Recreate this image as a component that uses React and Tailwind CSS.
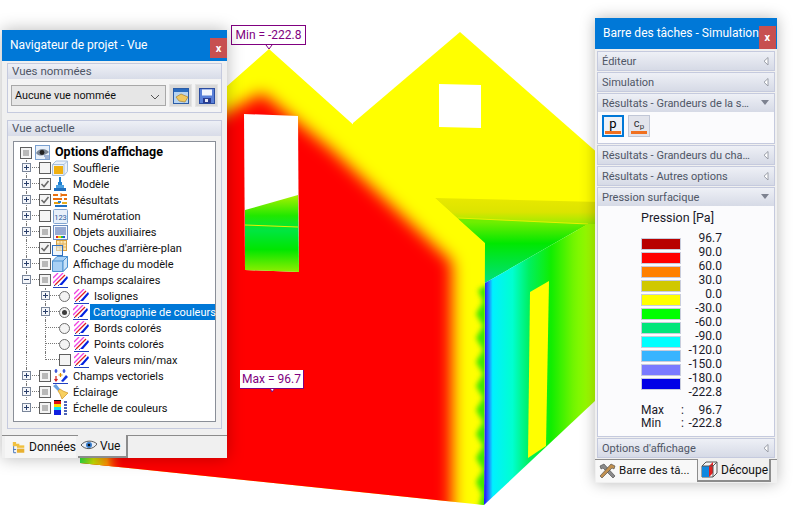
import React from "react";

const font = { fontFamily: 'Roboto, sans-serif' };

function Scene() {
  return (
    <svg className="absolute inset-0" width="796" height="506" viewBox="0 0 796 506">
      <defs>
        <filter id="soft" x="-20%" y="-20%" width="140%" height="140%">
          <feGaussianBlur stdDeviation="8" />
        </filter>
        <filter id="softer" x="-50%" y="-20%" width="200%" height="140%">
          <feGaussianBlur stdDeviation="2.5" />
        </filter>
        <clipPath id="frontWall">
          <polygon points="80,463 484,505 485,243 269,49 200,110 80,110" />
        </clipPath>
        <linearGradient id="sideWall" x1="485" y1="0" x2="595" y2="0" gradientUnits="userSpaceOnUse">
          <stop offset="0" stopColor="#2020ff" />
          <stop offset="0.025" stopColor="#3060ff" />
          <stop offset="0.07" stopColor="#00f0ff" />
          <stop offset="0.25" stopColor="#00ffd0" />
          <stop offset="0.4" stopColor="#00f060" />
          <stop offset="0.6" stopColor="#10ee00" />
          <stop offset="0.8" stopColor="#70f500" />
          <stop offset="1" stopColor="#b0ff00" />
        </linearGradient>
        <linearGradient id="floorBand" x1="0" y1="198" x2="0" y2="226" gradientUnits="userSpaceOnUse">
          <stop offset="0" stopColor="#e8e800" />
          <stop offset="0.5" stopColor="#dce400" />
          <stop offset="1" stopColor="#90ee00" />
        </linearGradient>
        <linearGradient id="inner" x1="0" y1="222" x2="0" y2="283" gradientUnits="userSpaceOnUse">
          <stop offset="0" stopColor="#70ee00" />
          <stop offset="0.35" stopColor="#00e800" />
          <stop offset="1" stopColor="#00e080" />
        </linearGradient>
        <linearGradient id="winGreen" x1="0" y1="197" x2="0" y2="272" gradientUnits="userSpaceOnUse">
          <stop offset="0" stopColor="#a0f000" />
          <stop offset="0.25" stopColor="#20e800" />
          <stop offset="0.45" stopColor="#00e640" />
          <stop offset="0.7" stopColor="#00e600" />
          <stop offset="1" stopColor="#90ee00" />
        </linearGradient>
        <linearGradient id="cornerLeft" x1="80" y1="0" x2="125" y2="0" gradientUnits="userSpaceOnUse">
          <stop offset="0" stopColor="#30e040" />
          <stop offset="0.3" stopColor="#c8e000" />
          <stop offset="0.6" stopColor="#ff9000" />
          <stop offset="1" stopColor="#ff0000" stopOpacity="0" />
        </linearGradient>
      </defs>

      {/* back gable */}
      <polygon points="353,123 460,32 600,155 600,230 353,230" fill="#ffff00" />
      <polygon points="439,84 481,85 481,128 439,127" fill="#ffffff" />

      {/* floor seen through the opening */}
      <polygon points="435,198 600,202 600,226 458,219" fill="url(#floorBand)" />
      <polygon points="458,218 588,224 485,283 470,260" fill="url(#inner)" />
      <line x1="458" y1="218" x2="588" y2="224" stroke="#e8f000" strokeWidth="1" />

      {/* side wall */}
      <polygon points="485,283 588,224 596,224 596,400 484,505" fill="url(#sideWall)" />
      <polygon points="530,292 549,281 546,446 528,458" fill="#ffff00" />

      {/* front wall */}
      <g clipPath="url(#frontWall)">
        <rect x="60" y="30" width="430" height="480" fill="#ffff00" />
        <polygon
          points="490,283 478,290 483,302 476,314 483,326 476,338 483,350 476,362 483,374 476,386 483,398 476,410 483,422 476,434 483,446 476,458 483,470 476,482 482,494 478,510 490,510"
          fill="#40e800"
          filter="url(#softer)"
        />
        <polygon points="60,130 205,125 262,93 332,150 452,262 452,520 60,520" fill="#ff0000" filter="url(#soft)" />
        <rect x="80" y="450" width="45" height="20" fill="url(#cornerLeft)" />
      </g>

      {/* window in the front wall */}
      <polygon points="244,114 298,116 299,272 245,270" fill="#ffffff" />
      <polygon points="245,210 298,195 299,272 245,270" fill="url(#winGreen)" />
      <line x1="245" y1="225" x2="298" y2="227" stroke="#e8f000" strokeWidth="1" />

      {/* tag pointers */}
      <path d="M266 45 L269 49 L272 45" fill="#fff" stroke="#800080" />
      <path d="M270 388 L272 392 L275 388" fill="#fff" stroke="#800080" />
    </svg>
  );
}

function Hatch() {
  return (
    <svg width="15" height="15" viewBox="0 0 15 15">
      <path d="M0 5L5 0M0 10L10 0" stroke="#f040e0" strokeWidth="1.3" />
      <path d="M2 12L12 2" stroke="#e02020" strokeWidth="1.3" />
      <path d="M6 12L14 3L15 5L9 12Z" fill="#0020e0" />
      <path d="M0 14.5H15" stroke="#2040c0" strokeWidth="1" />
      <path d="M1 12.5h1M5 12.5h1" stroke="#2040c0" />
    </svg>
  );
}

const icons = {
  eye: (
    <svg width="15" height="15" viewBox="0 0 15 15">
      <rect x="0.5" y="0.5" width="14" height="14" fill="#e8f0fa" stroke="#7aa0d0" />
      <path d="M1 8C4 3 10 3 14 7C10 11 4 12 1 8Z" fill="#7b8694" />
      <circle cx="7" cy="7.5" r="2.4" fill="#222" />
      <path d="M9 11h5M10 13h4" stroke="#5a7ab0" />
    </svg>
  ),
  wind: (
    <svg width="16" height="16" viewBox="0 0 16 16">
      <path d="M0.5 4.5L4 1H15.5V11.5L12 15.5H0.5Z" fill="#eaf1fa" stroke="#a8c0dc" />
      <path d="M0.5 4.5H12V15.5M12 4.5L15.5 1" fill="none" stroke="#a8c0dc" />
      <rect x="2" y="6" width="9" height="8" fill="#f0b010" />
    </svg>
  ),
  model: (
    <svg width="16" height="16" viewBox="0 0 16 16">
      <rect x="7" y="1" width="2" height="5" fill="#2080d0" />
      <rect x="6" y="6" width="4" height="3" fill="#2080d0" />
      <rect x="4" y="9" width="8" height="3" fill="#4aa0e0" />
      <rect x="2" y="12" width="12" height="3" fill="#2070c0" />
    </svg>
  ),
  results: (
    <svg width="16" height="16" viewBox="0 0 16 16">
      <path d="M1 2h5v2H1zM9 2h6v2H9zM1 6h9v2H1zM12 6h3v2h-3z" fill="#e87010" />
      <path d="M9 1v4" stroke="#e87010" />
      <rect x="2" y="10" width="6" height="2" fill="#e8a010" />
      <rect x="10" y="10" width="5" height="2" fill="#e8b020" />
      <rect x="6" y="9" width="3" height="2" fill="#2080d0" />
      <rect x="3" y="13" width="12" height="2" fill="#2070c0" />
    </svg>
  ),
  numbers: (
    <svg width="15" height="15" viewBox="0 0 15 15">
      <rect x="0.5" y="0.5" width="14" height="14" rx="1" fill="#e8f0fa" stroke="#80a4d0" />
      <text x="7.5" y="10.5" textAnchor="middle" fontSize="7.5" fill="#2a5a9a" style={font}>123</text>
    </svg>
  ),
  aux: (
    <svg width="15" height="15" viewBox="0 0 15 15">
      <rect x="0.5" y="0.5" width="14" height="14" fill="#f4f8fd" stroke="#6a8cc0" />
      <path d="M2 3h11M2 5h11M2 7h11M2 9h11" stroke="#3a5ca8" />
      <path d="M3 12h2" stroke="#e02020" strokeWidth="2" />
      <path d="M5 12h3" stroke="#f0d000" strokeWidth="2" />
      <path d="M8 12h2" stroke="#20c040" strokeWidth="2" />
      <path d="M10 12h2" stroke="#2050e0" strokeWidth="2" />
    </svg>
  ),
  layers: (
    <svg width="16" height="16" viewBox="0 0 16 16">
      <rect x="4.5" y="0.5" width="10" height="10" fill="#fbe6b0" stroke="#d8a040" />
      <path d="M8 1v9M11 1v9M5 4h9M5 7h9" stroke="#e0b060" />
      <rect x="0.5" y="5.5" width="10" height="10" fill="#dcebf8" fillOpacity="0.5" stroke="#3070c0" />
    </svg>
  ),
  cube: (
    <svg width="16" height="16" viewBox="0 0 16 16">
      <path d="M0.5 5L5 0.5H15.5V11L11 15.5H0.5Z" fill="#a8d0f4" stroke="#4a90d0" />
      <path d="M0.5 5H11V15.5M11 5L15.5 0.5" fill="none" stroke="#4a90d0" />
      <path d="M11 5L15.5 0.5V11L11 15.5Z" fill="#c8e2f8" stroke="#4a90d0" />
    </svg>
  ),
  hatch: <Hatch />,
  vectors: (
    <svg width="15" height="15" viewBox="0 0 15 15">
      <path d="M3 0v4M1.5 2h3M11 0v4M9.5 2h3" stroke="#1030d0" strokeWidth="1.2" />
      <path d="M7.5 4v4M5.5 6h4" stroke="#e09000" strokeWidth="1.2" />
      <path d="M3 7v5M1.5 10l1.5 2 1.5-2" stroke="#d02020" fill="none" strokeWidth="1.2" />
      <path d="M8 12L13 6L15 8L10 13Z" fill="#1030e0" />
      <path d="M0 14.5H15" stroke="#2040c0" />
    </svg>
  ),
  light: (
    <svg width="15" height="16" viewBox="0 0 15 16">
      <path d="M0 2L3 0L7 5L5 7Z" fill="#6aa0e0" />
      <path d="M5 7L7 5L10 7L15 9L9 15L7 10Z" fill="#f8d060" stroke="#d09020" strokeWidth="0.7" />
    </svg>
  ),
  scale: (
    <svg width="15" height="16" viewBox="0 0 15 16">
      <rect x="1" y="0" width="7" height="3" fill="#111" />
      <rect x="1" y="1" width="7" height="3" fill="#e01010" />
      <rect x="1" y="4" width="7" height="3" fill="#f8e000" />
      <rect x="1" y="7" width="7" height="3" fill="#10e0f0" />
      <rect x="1" y="10" width="7" height="5" fill="#1020e0" />
      <path d="M11 2h3M11 5h3M11 8h3M11 11h3M11 14h3" stroke="#1030a0" strokeWidth="1.4" />
    </svg>
  ),
};

const tree = [
  { label: "Soufflerie", icon: "wind", check: "off", exp: "+" },
  { label: "Modèle", icon: "model", check: "on", exp: "+" },
  { label: "Résultats", icon: "results", check: "on", exp: "+" },
  { label: "Numérotation", icon: "numbers", check: "off", exp: "+" },
  { label: "Objets auxiliaires", icon: "aux", check: "mid", exp: "+" },
  { label: "Couches d'arrière-plan", icon: "layers", check: "on" },
  { label: "Affichage du modèle", icon: "cube", check: "mid", exp: "+" },
  { label: "Champs scalaires", icon: "hatch", check: "mid", exp: "-" },
  { label: "Isolignes", icon: "hatch", radio: "off", exp: "+", sub: true },
  { label: "Cartographie de couleurs", icon: "hatch", radio: "on", exp: "+", sub: true, selected: true },
  { label: "Bords colorés", icon: "hatch", radio: "off", sub: true },
  { label: "Points colorés", icon: "hatch", radio: "off", sub: true },
  { label: "Valeurs min/max", icon: "hatch", check: "off", sub: true, last: true },
  { label: "Champs vectoriels", icon: "vectors", check: "mid", exp: "+" },
  { label: "Éclairage", icon: "light", check: "mid", exp: "+" },
  { label: "Échelle de couleurs", icon: "scale", check: "mid", exp: "+", end: true },
];

function Check({ state }) {
  return (
    <span className="w-[12px] h-[12px] border border-[#5e5e5e] bg-[#f4f4f4] flex items-center justify-center shrink-0">
      {state === "mid" && <span className="w-[6px] h-[6px] bg-[#b8b8b8]" />}
      {state === "on" && (
        <svg width="10" height="10" viewBox="0 0 10 10">
          <path d="M1.5 5L4 7.5L8.5 2" fill="none" stroke="#6a6a6a" strokeWidth="1.6" />
        </svg>
      )}
    </span>
  );
}

function Radio({ on }) {
  return (
    <span className="w-[11px] h-[11px] rounded-full border border-[#6e6e6e] bg-[#f4f4f4] flex items-center justify-center shrink-0">
      {on && <span className="w-[5px] h-[5px] rounded-full bg-[#3c3c3c]" />}
    </span>
  );
}

function Expander({ sign }) {
  return (
    <span className="absolute left-[5px] top-[3px] w-[9px] h-[9px] border border-[#7a869a] bg-[#f4f6fa] flex items-center justify-center">
      <span className="absolute w-[5px] h-px bg-[#2a3f6a]" />
      {sign === "+" && <span className="absolute w-px h-[5px] bg-[#2a3f6a]" />}
    </span>
  );
}

// one slot of the tree gutter with its dotted connectors
function Gutter({ className, vertical, half, elbow, sign }) {
  return (
    <span className={`relative h-4 shrink-0 ${className}`}>
      {vertical && (
        <span className={half ? "absolute left-[9px] top-0 h-[8px] border-l border-dotted border-[#777]" : "absolute left-[9px] top-0 h-4 border-l border-dotted border-[#777]"} />
      )}
      {elbow && <span className="absolute left-[9px] right-0 top-[7px] border-t border-dotted border-[#777]" />}
      {sign && <Expander sign={sign} />}
    </span>
  );
}

function TreeRow({ row }) {
  return (
    <div className="flex items-center h-4 text-[11px] text-[#111]">
      {row.sub && <Gutter className="w-[19px]" vertical />}
      <Gutter className={row.sub ? "w-[23px]" : "w-[22px]"} vertical={!row.end} half={row.last} elbow sign={row.exp} />
      {row.radio ? <Radio on={row.radio === "on"} /> : <Check state={row.check} />}
      <span className={row.sub ? (row.radio ? "w-[3px]" : "w-[2px]") : "w-px"} />
      <span className="w-4 h-4 flex items-center justify-center shrink-0">{icons[row.icon]}</span>
      {row.selected ? (
        <span className="ml-[2px] pl-[3px] w-[125px] h-4 bg-[#0078d7] text-white leading-[17px] whitespace-nowrap">{row.label}</span>
      ) : (
        <span className="ml-[5px] h-4 leading-[17px] whitespace-nowrap">{row.label}</span>
      )}
    </div>
  );
}

function NavigatorPanel() {
  return (
    <div className="absolute left-[2px] top-[30px] w-[225px] h-[428px] bg-[#f0f0f0] flex flex-col shadow-[0_0_16px_rgba(0,0,0,0.28)]" style={font}>
      <div className="h-[31px] bg-[#0078d7] flex items-start justify-between pl-[8px] text-white text-[12px]">
        <span className="leading-[31px]">Navigateur de projet - Vue</span>
        <span className="mt-[8px] w-[17px] h-[20px] bg-[#c75050] flex items-center justify-center text-[11px] font-bold leading-none">x</span>
      </div>

      <div className="mx-[5px] mt-[2px] h-[50px] border border-[#c5cade] flex flex-col">
        <div className="h-[15px] bg-gradient-to-b from-[#eef0f6] to-[#d8dce8] text-[11.5px] leading-[15px] pl-[4px] text-[#4f5666]">Vues nommées</div>
        <div className="flex items-center pl-[3px] pt-[5px] bg-[#f4f4f4] flex-1 pb-[5px]">
          <div className="w-[155px] h-[21px] border border-[#a8a8a8] bg-[#e6e6e6] flex items-center justify-between pl-[3px] pr-[5px] pt-[2px] text-[10.8px] text-[#111]">
            <span>Aucune vue nommée</span>
            <svg width="10" height="6" viewBox="0 0 10 6">
              <path d="M1 1L5 5L9 1" fill="none" stroke="#555" />
            </svg>
          </div>
          <div className="ml-[3px] w-[23px] h-[23px] bg-[#d8d8d8] border border-[#e4e4e4] flex items-center justify-center">
            <svg width="16" height="16" viewBox="0 0 16 16">
              <rect x="0.5" y="0.5" width="15" height="15" fill="#b8d4f0" stroke="#2a5ca8" />
              <rect x="1" y="1" width="14" height="3" fill="#2a6cc0" />
              <path d="M3 9L8 6L15 9L12 14L6 13Z" fill="#f0c860" stroke="#a07820" strokeWidth="0.6" />
            </svg>
          </div>
          <div className="ml-[3px] w-[23px] h-[23px] bg-[#d8d8d8] border border-[#e4e4e4] flex items-center justify-center">
            <svg width="16" height="16" viewBox="0 0 16 16">
              <rect x="0.5" y="0.5" width="15" height="15" fill="#5a80d8" stroke="#2a4ca0" />
              <rect x="3" y="1.5" width="10" height="6" fill="#f4f6fc" />
              <rect x="4" y="10" width="8" height="5" fill="#2a3c90" />
              <rect x="6" y="11" width="3" height="3" fill="#e8ecf8" />
            </svg>
          </div>
        </div>
      </div>

      <div className="mx-[5px] mt-[7px] h-[309px] border border-[#c5cade] flex flex-col">
        <div className="h-[15px] bg-gradient-to-b from-[#eef0f6] to-[#d8dce8] text-[11.5px] leading-[15px] pl-[4px] text-[#4f5666]">Vue actuelle</div>
        <div className="mx-[5px] mt-[5px] h-[281px] border border-[#8a8f98] bg-white pl-[3px] pt-[2px]">
          <div className="flex items-center h-4 pl-[3px] pt-[1px] text-[12.5px] font-bold text-black">
            <Check state="mid" />
            <span className="w-[3px]" />
            {icons.eye}
            <span className="ml-[5px] whitespace-nowrap">Options d'affichage</span>
          </div>
          {tree.map((row) => (
            <TreeRow key={row.label} row={row} />
          ))}
        </div>
      </div>

      <div className="mt-[6px] flex-1 flex items-start border-t border-[#8c8c8c]">
        <div className="ml-[3px] w-[71px] h-[22px] bg-[#f6f6f6] flex items-center gap-[4px] pl-[7px] text-[12px] text-[#111]">
          <svg width="16" height="16" viewBox="0 0 16 16">
            <path d="M1 2H5V4H9V7H1Z" fill="#f0c040" />
            <path d="M2 7V15H5M2 11H5" fill="none" stroke="#2a60b0" />
            <rect x="6" y="6" width="9" height="3" fill="#f0c040" />
            <rect x="6" y="10" width="9" height="5" fill="#e8b030" />
          </svg>
          <span>Données</span>
        </div>
        <div className="ml-[2px] -mt-px w-[50px] h-[23px] bg-[#f0f0f0] border-r-2 border-b-2 border-[#8c8c8c] flex items-center gap-[3px] pl-[3px] text-[12px] text-[#111]">
          <svg width="16" height="12" viewBox="0 0 16 12">
            <path d="M0 5C4 0 12 0 16 4C12 10 4 10 0 5Z" fill="#e8eef6" stroke="#333" strokeWidth="0.8" />
            <circle cx="8" cy="5" r="3" fill="#3a80d0" />
            <circle cx="8" cy="5" r="1.3" fill="#111" />
          </svg>
          <span>Vue</span>
        </div>
      </div>
    </div>
  );
}

function SectionHead({ title, open }) {
  return (
    <div className="h-[18px] bg-gradient-to-b from-[#eef0f6] to-[#d6dae6] flex items-center justify-between pl-[4px] pr-[5px] text-[11px] text-[#4f5666] whitespace-nowrap">
      <span className="pt-[2px]">{title}</span>
      {open ? (
        <svg width="8" height="6" viewBox="0 0 8 6">
          <path d="M0 0H8L4 5Z" fill="#7d8290" />
        </svg>
      ) : (
        <svg width="6" height="9" viewBox="0 0 6 9">
          <path d="M5 0.5V8L1 4.2Z" fill="#fff" stroke="#9a9ea8" />
        </svg>
      )}
    </div>
  );
}

function Section({ title, open, children }) {
  return (
    <div className="border border-[#c5cade] mx-[2px]">
      <SectionHead title={title} open={open} />
      {children}
    </div>
  );
}

const legend = [
  ["#b80000", "96.7"],
  ["#ff0000", "90.0"],
  ["#ff8000", "60.0"],
  ["#d0c800", "30.0"],
  ["#ffff00", "0.0"],
  ["#00ff00", "-30.0"],
  ["#00e67a", "-60.0"],
  ["#00ffff", "-90.0"],
  ["#38b4ff", "-120.0"],
  ["#7a7aff", "-150.0"],
  ["#0000e6", "-180.0"],
];

function Legend() {
  return (
    <div className="h-[230px] bg-[#fbfbfd] pl-[43px] text-[12px] text-[#1a1a2a]">
      <div className="pt-[4px] h-[20px] leading-[15px] text-[12.5px]">Pression [Pa]</div>
      <div className="flex mt-[5px]">
        <div className="flex flex-col gap-[2px] mt-[7px]">
          {legend.map(([color]) => (
            <span key={color} className="w-[40px] h-[12px] border border-[#c8ccdc]" style={{ background: color }} />
          ))}
        </div>
        <div className="w-[41px] flex flex-col items-end">
          {legend.map(([, value]) => (
            <span key={value} className="h-[14px] leading-[14px]">{value}</span>
          ))}
          <span className="h-[14px] leading-[14px]">-222.8</span>
        </div>
      </div>
      <div className="mt-[5px] w-[81px] flex justify-between leading-[13px]">
        <span className="w-[38px]">Max</span><span>:</span><span className="w-[36px] text-right">96.7</span>
      </div>
      <div className="w-[81px] flex justify-between leading-[13px]">
        <span className="w-[38px]">Min</span><span>:</span><span className="w-[36px] text-right">-222.8</span>
      </div>
    </div>
  );
}

function TaskPanel() {
  return (
    <div className="absolute left-[595px] top-[18px] w-[182px] h-[465px] bg-[#f0f0f0] flex flex-col shadow-[0_0_14px_rgba(0,0,0,0.28)]" style={font}>
      <div className="h-[31px] bg-[#0078d7] flex items-start justify-between pl-[8px] pr-[1px] text-white text-[12px] whitespace-nowrap">
        <span className="leading-[31px]">Barre des tâches - Simulation</span>
        <span className="mt-[8px] w-[19px] h-[23px] bg-[#c75050] flex items-center justify-center text-[11px] font-bold leading-none">x</span>
      </div>
      <div className="flex flex-col gap-px mt-[2px]">
        <Section title="Éditeur" />
        <Section title="Simulation" />
        <Section title="Résultats - Grandeurs de la s…" open>
          <div className="h-[31px] bg-[#fbfbfd] flex gap-[4px] pl-[4px] pt-[3px]">
            <div className="w-[22px] h-[22px] border-2 border-[#0078d7] bg-[#eef2f8] flex flex-col items-center text-[13px] leading-[13px] text-black">
              <span className="h-[14px]">p</span>
              <span className="w-[16px] h-[3px] bg-[#f07020]" />
            </div>
            <div className="w-[22px] h-[22px] border border-[#c0c6d6] bg-[#e2e4ec] flex flex-col items-center text-[11px] leading-[13px] text-[#333]">
              <span className="h-[14px] mt-[1px]">c<sub className="text-[8px]">p</sub></span>
              <span className="w-[16px] h-[3px] bg-[#f07020]" />
            </div>
          </div>
        </Section>
        <Section title="Résultats - Grandeurs du cha…" />
        <Section title="Résultats - Autres options" />
        <Section title="Pression surfacique" open>
          <Legend />
        </Section>
        <Section title="Options d'affichage" />
      </div>
      <div className="mt-[1px] flex-1 flex items-start text-[12px] text-[#111] border-t border-[#8c8c8c]">
        <div className="ml-[1px] w-[101px] h-[22px] bg-[#f8f8f8] flex items-center gap-[3px] pl-[3px] whitespace-nowrap text-[11.5px]">
          <svg width="17" height="16" viewBox="0 0 17 16">
            <path d="M1 3L5 1L16 13L14 15L4 5L2 6Z" fill="#8a8a8a" stroke="#444" strokeWidth="0.6" />
            <path d="M16 3L12 1L1 13L3 15L13 5L15 6Z" fill="#c09050" stroke="#444" strokeWidth="0.6" />
          </svg>
          <span>Barre des tâ...</span>
        </div>
        <div className="w-[74px] h-[23px] -mt-px bg-[#f0f0f0] border-l border-r-2 border-b-2 border-[#8c8c8c] flex items-center gap-[3px] pl-[3px] whitespace-nowrap">
          <svg width="17" height="17" viewBox="0 0 17 17">
            <path d="M5 1H16V12L12 16H1V5Z" fill="#f4f4f4" stroke="#555" />
            <path d="M1 5H8V16H1Z" fill="#1088e0" />
            <path d="M8 5L12 1V12L8 16Z" fill="#e02020" />
            <path d="M1 5H12V16M12 5L16 1" fill="none" stroke="#555" />
          </svg>
          <span>Découpe</span>
        </div>
      </div>
    </div>
  );
}

function ValueTag({ className, children }) {
  return (
    <div className={`absolute bg-white text-[#800080] text-[12px] flex items-center justify-center leading-none ${className}`} style={font}>
      {children}
    </div>
  );
}

export default function App() {
  return (
    <div className="relative w-[796px] h-[506px] bg-white overflow-hidden">
      <Scene />
      <ValueTag className="left-[231px] top-[25px] w-[75px] h-[20px] border border-[#800080]">Min = -222.8</ValueTag>
      <ValueTag className="left-[240px] top-[370px] w-[64px] h-[19px] border-b border-r border-[#800080]">Max = 96.7</ValueTag>
      <NavigatorPanel />
      <TaskPanel />
    </div>
  );
}
